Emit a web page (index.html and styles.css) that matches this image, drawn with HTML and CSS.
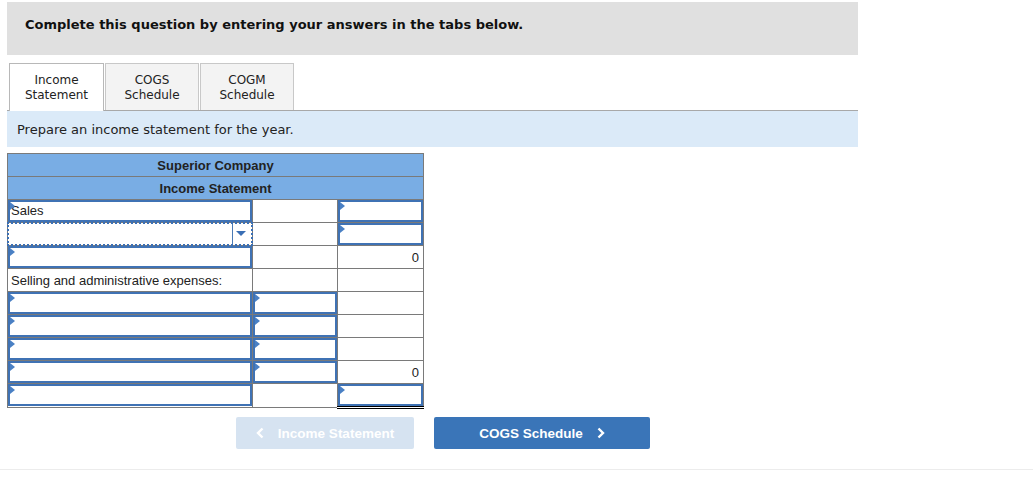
FILE: index.html
```html
<!DOCTYPE html>
<html>
<head>
<meta charset="utf-8">
<link rel="stylesheet" href="styles.css">
</head>
<body>
<div class="page">
  <div class="banner">Complete this question by entering your answers in the tabs below.</div>
  <div class="tabs">
    <div class="tab active">Income<br>Statement</div>
    <div class="tab">COGS<br>Schedule</div>
    <div class="tab">COGM<br>Schedule</div>
  </div>
  <div class="prompt">Prepare an income statement for the year.</div>
  <table class="sheet">
    <colgroup><col class="c1"><col class="c2"><col class="c3"></colgroup>
    <tr class="head"><td colspan="3">Superior Company</td></tr>
    <tr class="head"><td colspan="3">Income Statement</td></tr>
    <tr>
      <td><div class="inp"><span class="flag"></span><span class="txt">Sales</span></div></td>
      <td></td>
      <td><div class="inp"><span class="flag"></span></div></td>
    </tr>
    <tr>
      <td><div class="sel"><span class="sep"></span><span class="arrow"></span></div></td>
      <td></td>
      <td><div class="inp"><span class="flag"></span></div></td>
    </tr>
    <tr>
      <td><div class="inp"><span class="flag"></span></div></td>
      <td></td>
      <td class="total num">0</td>
    </tr>
    <tr>
      <td class="label">Selling and administrative expenses:</td>
      <td></td>
      <td></td>
    </tr>
    <tr>
      <td><div class="inp"><span class="flag"></span></div></td>
      <td><div class="inp"><span class="flag"></span></div></td>
      <td></td>
    </tr>
    <tr>
      <td><div class="inp"><span class="flag"></span></div></td>
      <td><div class="inp"><span class="flag"></span></div></td>
      <td></td>
    </tr>
    <tr>
      <td><div class="inp"><span class="flag"></span></div></td>
      <td><div class="inp"><span class="flag"></span></div></td>
      <td></td>
    </tr>
    <tr>
      <td><div class="inp"><span class="flag"></span></div></td>
      <td><div class="inp"><span class="flag"></span></div></td>
      <td class="num">0</td>
    </tr>
    <tr>
      <td><div class="inp"><span class="flag"></span></div></td>
      <td></td>
      <td class="total dbl"><div class="inp"><span class="flag"></span></div></td>
    </tr>
  </table>
  <div class="nav">
    <div class="btn prev"><svg class="chev" width="8" height="12" viewBox="0 0 8 12"><path d="M6.5 1.5 L2 6 L6.5 10.5" fill="none" stroke="#fff" stroke-width="2.4"/></svg>Income Statement</div>
    <div class="btn next">COGS Schedule<svg class="chev r" width="8" height="12" viewBox="0 0 8 12"><path d="M1.5 1.5 L6 6 L1.5 10.5" fill="none" stroke="#fff" stroke-width="2.4"/></svg></div>
  </div>
</div>
<div class="footer-line"></div>
</body>
</html>
```
FILE: styles.css
```css
html, body {
  margin: 0;
  padding: 0;
  background: #fff;
}
.page {
  padding: 2px 0 0 7px;
  width: 851px;
}
.banner {
  background: #e0e0e0;
  height: 53px;
  box-sizing: border-box;
  padding: 15px 0 0 18px;
  font-family: "DejaVu Sans", Verdana, sans-serif;
  font-weight: bold;
  font-size: 13px;
  color: #111;
}
.tabs {
  margin-top: 8px;
  display: flex;
  gap: 1px;
  padding-left: 2px;
  border-bottom: 1px solid #a8a8a8;
  height: 47px;
}
.tab {
  width: 94px;
  box-sizing: border-box;
  border: 1px solid #c8c8c8;
  border-bottom: none;
  background: #f3f3f3;
  font-family: "DejaVu Sans", Verdana, sans-serif;
  font-size: 12px;
  line-height: 15px;
  color: #222;
  text-align: center;
  padding-top: 9px;
}
.tab.active {
  background: #fff;
  border-color: #b8b8b8;
  width: 95px;
  height: 48px;
  margin-bottom: -1px;
}
.prompt {
  background: #dbeaf8;
  height: 36px;
  box-sizing: border-box;
  padding: 11px 0 0 10px;
  font-family: "DejaVu Sans", Verdana, sans-serif;
  font-size: 13px;
  color: #222;
}
.sheet {
  margin-top: 6px;
  border-collapse: collapse;
  table-layout: fixed;
  width: 416px;
  font-family: "Liberation Sans", Arial, sans-serif;
  font-size: 13px;
  color: #222;
}
.c1 { width: 245px; }
.c2 { width: 85px; }
.c3 { width: 86px; }
.sheet td {
  border: 1px solid #7a7a7a;
  height: 22px;
  padding: 0;
  box-sizing: border-box;
  vertical-align: top;
}
.sheet tr { height: 23px; }
.sheet .head td {
  background: #79ade4;
  text-align: center;
  font-weight: bold;
  vertical-align: middle;
  color: #222;
}
.inp {
  position: relative;
  height: 22px;
  box-sizing: border-box;
  border: 2px solid #3f72b4;
}
.flag {
  position: absolute;
  left: 0;
  top: 0;
  width: 0;
  height: 0;
  border-top: 4px solid transparent;
  border-bottom: 4px solid transparent;
  border-left: 5px solid #4a80c4;
}
.txt {
  display: block;
  padding: 0 0 0 1px;
  line-height: 17px;
}
.sel {
  position: relative;
  height: 22px;
  outline: 2px dotted #3a6fb5;
  outline-offset: -1px;
}
.sep {
  position: absolute;
  left: 224px;
  top: 1px;
  bottom: 1px;
  width: 1px;
  background: #4a7ab5;
}
.arrow {
  position: absolute;
  left: 228px;
  top: 8px;
  width: 0;
  height: 0;
  border-left: 5px solid transparent;
  border-right: 5px solid transparent;
  border-top: 5px solid #3a6fb5;
}
.label {
  padding: 0 0 0 3px !important;
  vertical-align: middle !important;
}
.num {
  text-align: right;
  padding-right: 4px !important;
  vertical-align: middle !important;
}
.sheet td.total {
  border-top: 1px solid #000;
}
.sheet td.dbl {
  border-bottom: 3px double #000;
}
.nav {
  margin: 8px 0 0 229px;
  display: flex;
  gap: 20px;
}
.btn {
  height: 32px;
  border-radius: 2px;
  font-family: "Liberation Sans", Arial, sans-serif;
  font-weight: bold;
  font-size: 13.5px;
  color: #fff;
  display: flex;
  align-items: center;
  justify-content: center;
  box-sizing: border-box;
}
.prev {
  width: 178px;
  background: #d6e3f1;
}
.next {
  width: 216px;
  background: #3a75b8;
}
.chev {
  display: block;
  margin-right: 14px;
}
.chev.r {
  margin-right: 0;
  margin-left: 14px;
}
.footer-line {
  margin-top: 20px;
  border-top: 1px solid #ececec;
  height: 8px;
}
```
